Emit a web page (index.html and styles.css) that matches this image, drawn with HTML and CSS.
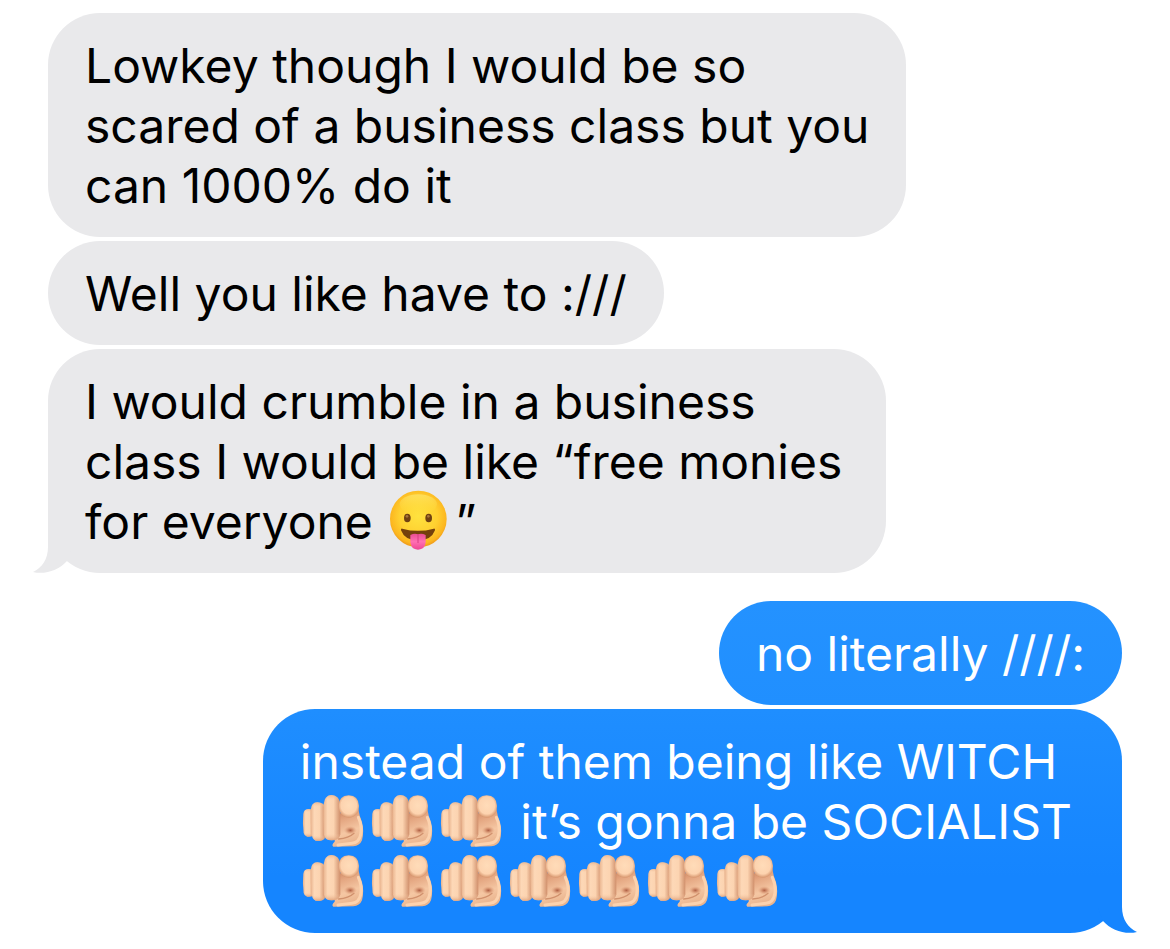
FILE: index.html
```html
<!DOCTYPE html>
<html lang="en">
<head>
    <meta charset="UTF-8">
    <meta name="viewport" content="width=device-width, initial-scale=1.0">
    <title>Messages</title>
    <link rel="stylesheet" href="styles.css">
</head>
<body>
    <!-- shared shapes -->
    <svg class="shapes" aria-hidden="true">
        <defs>
            <radialGradient id="faceFill" cx="0.5" cy="0.45" r="0.56">
                <stop offset="0" stop-color="#ffe23f"/>
                <stop offset="0.6" stop-color="#ffd030"/>
                <stop offset="0.88" stop-color="#fcb61f"/>
                <stop offset="1" stop-color="#ec9318"/>
            </radialGradient>
            <linearGradient id="faceShine" x1="0" y1="0" x2="0" y2="1">
                <stop offset="0" stop-color="#fff38a" stop-opacity="0.5"/>
                <stop offset="1" stop-color="#ffe23f" stop-opacity="0"/>
            </linearGradient>
            <linearGradient id="tongueFill" x1="0" y1="0" x2="0" y2="1">
                <stop offset="0" stop-color="#e94d91"/>
                <stop offset="0.5" stop-color="#ff70b2"/>
                <stop offset="1" stop-color="#ee4593"/>
            </linearGradient>
            <linearGradient id="fingerFill" x1="0" y1="0" x2="1" y2="0">
                <stop offset="0" stop-color="#e9b38d"/>
                <stop offset="0.25" stop-color="#fdd8b7"/>
                <stop offset="0.6" stop-color="#fcd4b1"/>
                <stop offset="1" stop-color="#d08f6b"/>
            </linearGradient>
            <linearGradient id="fingerShade" x1="0" y1="0" x2="0" y2="1">
                <stop offset="0" stop-color="#e2ab87" stop-opacity="0.7"/>
                <stop offset="0.12" stop-color="#f8cda8" stop-opacity="0"/>
                <stop offset="0.85" stop-color="#f8cda8" stop-opacity="0"/>
                <stop offset="1" stop-color="#d99872" stop-opacity="0.8"/>
            </linearGradient>
            <radialGradient id="tipFill" cx="0.5" cy="0.45" r="0.55">
                <stop offset="0" stop-color="#ffdcb9"/>
                <stop offset="0.7" stop-color="#fdd3af"/>
                <stop offset="1" stop-color="#d8976f"/>
            </radialGradient>
            <linearGradient id="palmFill" x1="0" y1="0" x2="0.3" y2="1">
                <stop offset="0" stop-color="#c67a58"/>
                <stop offset="0.35" stop-color="#e4a681"/>
                <stop offset="0.7" stop-color="#f5c7a3"/>
                <stop offset="1" stop-color="#eab48e"/>
            </linearGradient>
            <radialGradient id="creaseFill">
                <stop offset="0" stop-color="#ad5d42"/>
                <stop offset="0.4" stop-color="#c87e5d" stop-opacity="0.7"/>
                <stop offset="1" stop-color="#e4a681" stop-opacity="0"/>
            </radialGradient>
        </defs>
        <symbol id="face" viewBox="15 33 207 180">
            <circle cx="112" cy="120" r="85" fill="url(#faceFill)"/>
            <ellipse cx="112" cy="76" rx="56" ry="30" fill="url(#faceShine)"/>
            <ellipse cx="79" cy="117" rx="10" ry="13" fill="#704112"/>
            <ellipse cx="143" cy="117" rx="10" ry="13" fill="#704112"/>
            <ellipse cx="78" cy="112" rx="4" ry="4" fill="#a9763a"/>
            <ellipse cx="142" cy="112" rx="4" ry="4" fill="#a9763a"/>
            <path d="M64 149 Q111 162 158 149 Q163 148 162 154 Q151 184 111 185 Q71 184 60 154 Q59 148 64 149Z" fill="#74400c"/>
            <path d="M88 168 Q101 161 111 166 Q121 161 134 168 V190 Q132 212 111 212 Q90 212 88 190Z" fill="url(#tongueFill)"/>
            <path d="M111 168 V191" fill="none" stroke="#d63f82" stroke-width="3" stroke-linecap="round"/>
        </symbol>
        <symbol id="hand" viewBox="18 21 207 171">
            <path d="M126 88 L193 72 Q196 92 204 112 Q211 140 204 166 Q197 183 178 184 L118 185 Q111 180 122 170Z" fill="url(#palmFill)"/>
            <path d="M193 97 Q205 122 200 149 Q195 173 174 175 L132 180" fill="none" stroke="#fcd2ae" stroke-width="9" stroke-linecap="round" stroke-linejoin="round"/>
            <path d="M134 162 Q164 160 180 145" fill="none" stroke="#d1916d" stroke-width="4" stroke-linecap="round"/>
            <ellipse cx="169" cy="136" rx="20" ry="13" fill="url(#creaseFill)"/>
            <path d="M28 86 Q30 73 43 72 Q55 72 60 80 V151 Q53 156 40 155 Q31 153 29 144 Q25 115 28 86Z" fill="url(#fingerFill)"/>
            <path d="M28 86 Q30 73 43 72 Q55 72 60 80 V151 Q53 156 40 155 Q31 153 29 144 Q25 115 28 86Z" fill="url(#fingerShade)"/>
            <path d="M50 74 Q52 53 70 52 Q90 53 94 67 V155 Q90 168 72 168 Q57 167 54 152 Q49 112 50 74Z" fill="url(#fingerFill)"/>
            <path d="M50 74 Q52 53 70 52 Q90 53 94 67 V155 Q90 168 72 168 Q57 167 54 152 Q49 112 50 74Z" fill="url(#fingerShade)"/>
            <path d="M89 58 Q91 32 112 30 Q136 31 139 58 V149 Q134 166 113 166 Q93 166 90 149 Q87 104 89 58Z" fill="url(#fingerFill)"/>
            <path d="M89 58 Q91 32 112 30 Q136 31 139 58 V149 Q134 166 113 166 Q93 166 90 149 Q87 104 89 58Z" fill="url(#fingerShade)"/>
            <path d="M134 63 Q134 32 164 31 Q194 32 195 63 Q194 97 164 98 Q135 97 134 63Z" fill="url(#tipFill)"/>
        </symbol>
        <symbol id="tail" viewBox="0 0 40 55">
            <path d="M16 0 V29 C16 41 10 50 1 54 C13 57 27 52 35 43 L40 30 V0Z" fill="currentColor"/>
        </symbol>
    </svg>

    <main class="chat">
        <section class="group received">
            <p class="bubble">Lowkey though I would be so<br>scared of a business class but you<br>can 1000% do it</p>
            <p class="bubble">Well you like have to :///</p>
            <p class="bubble last">I would crumble in a business<br>class I would be like “free monies<br>for everyone <svg class="emoji face" role="img" aria-label="😛"><use href="#face"/></svg>”<svg class="tail" aria-hidden="true"><use href="#tail"/></svg></p>
        </section>

        <section class="group sent">
            <p class="bubble">no literally ////:</p>
            <p class="bubble last">instead of them being like WITCH<br><svg class="emoji hand" role="img" aria-label="🫵🏻"><use href="#hand"/></svg><svg class="emoji hand" role="img" aria-label="🫵🏻"><use href="#hand"/></svg><svg class="emoji hand" role="img" aria-label="🫵🏻"><use href="#hand"/></svg> it’s gonna be SOCIALIST<br><svg class="emoji hand" role="img" aria-label="🫵🏻"><use href="#hand"/></svg><svg class="emoji hand" role="img" aria-label="🫵🏻"><use href="#hand"/></svg><svg class="emoji hand" role="img" aria-label="🫵🏻"><use href="#hand"/></svg><svg class="emoji hand" role="img" aria-label="🫵🏻"><use href="#hand"/></svg><svg class="emoji hand" role="img" aria-label="🫵🏻"><use href="#hand"/></svg><svg class="emoji hand" role="img" aria-label="🫵🏻"><use href="#hand"/></svg><svg class="emoji hand" role="img" aria-label="🫵🏻"><use href="#hand"/></svg><svg class="tail" aria-hidden="true"><use href="#tail"/></svg></p>
        </section>
    </main>
</body>
</html>
```

FILE: styles.css
```css
body {
    margin: 0;
    background: #fff;
    color: #000;
    font-family: Inter, "Liberation Sans", sans-serif;
    font-size: 48px;
    line-height: 60px;
}

.shapes {
    position: absolute;
    width: 0;
    height: 0;
}

.chat {
    display: flex;
    flex-direction: column;
    gap: 28px;
    padding: 13px 48px 15px;
}

.group {
    display: flex;
    flex-direction: column;
    gap: 4px;
}

.received {
    align-items: flex-start;
}

.sent {
    align-items: flex-end;
}

.bubble {
    position: relative;
    box-sizing: border-box;
    margin: 0;
    padding: 23px 37px 21px;
    border-radius: 52px;
    background: #e9e9eb;
}

.received .last {
    width: 78%;
}

.sent .bubble {
    color: #fff;
    background: linear-gradient(#2492ff, #208fff);
}

.sent .last {
    width: 80%;
    background: linear-gradient(#1f8eff, #1585ff 75%);
}

/* bubble tail */
.tail {
    position: absolute;
    bottom: 0;
    left: -16px;
    width: 40px;
    height: 55px;
    color: #e9e9eb;
}

.sent .tail {
    left: auto;
    right: -16px;
    color: #1585ff;
    transform: scaleX(-1);
}

.emoji {
    width: 69px;
}

.face {
    height: 60px;
    margin-top: -6px;
    vertical-align: -11px;
}

.hand {
    height: 57px;
    margin-top: -6px;
    vertical-align: -10px;
}
```
